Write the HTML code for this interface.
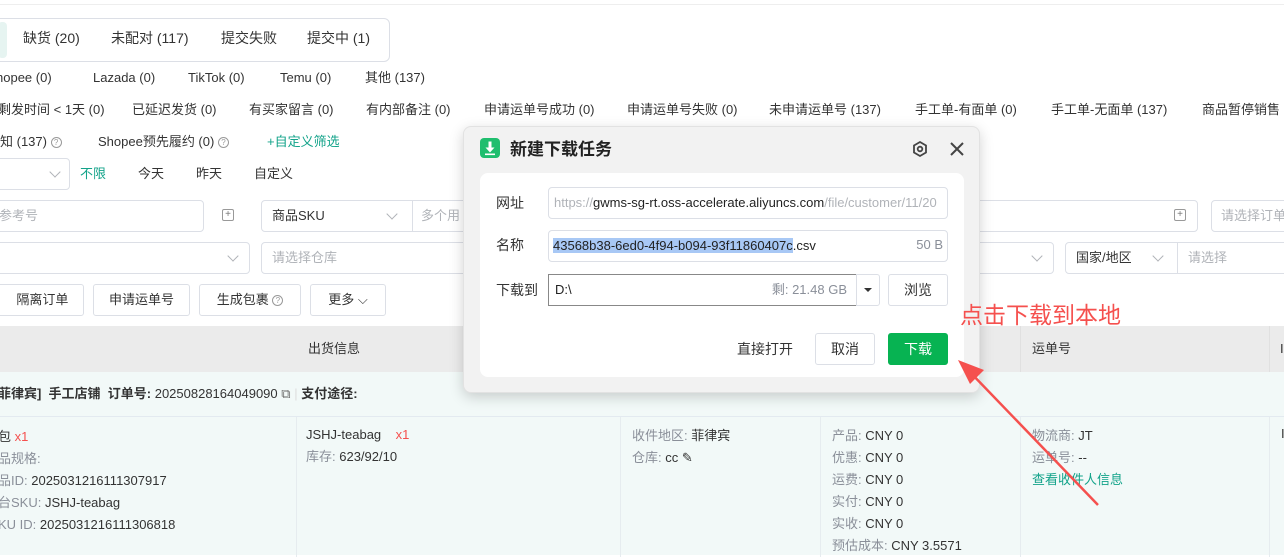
<!DOCTYPE html>
<html><head><meta charset="utf-8"><style>
*{box-sizing:border-box;margin:0;padding:0}
body{width:1284px;height:555px;overflow:hidden;position:relative;background:#fff;font-family:"Liberation Sans","Noto Sans CJK SC",sans-serif;font-size:13px;line-height:17px;color:#333}
.a{position:absolute;white-space:nowrap}
.box{position:absolute;border:1px solid #dcdfe6;border-radius:4px;background:#fff}
.ph{color:#b0b3b8}
.chev{position:absolute;width:8px;height:8px;border-right:1px solid #b0b3b8;border-bottom:1px solid #b0b3b8;transform:rotate(45deg)}
.g{color:#13a38a}
.gray{color:#8a8f99}
.red{color:#f5504e}
.btn{position:absolute;border:1px solid #dcdfe6;border-radius:3px;background:#fff;text-align:center;line-height:29px}
.q{display:inline-block;width:11px;height:11px;border:1px solid #999;border-radius:50%;font-size:8px;line-height:9px;text-align:center;color:#999;vertical-align:1px}
</style></head><body>
<div class="a" style="left:0;top:4px;width:1284px;border-top:1px solid #eee"></div>
<div class="box" style="left:-10px;top:18px;width:400px;height:44px;border-radius:6px"></div>
<div class="a" style="left:-2px;top:22px;width:9px;height:36px;background:#e6f4f1;border-radius:4px"></div>
<div class="a" style="left:23px;top:30px;font-size:14px">缺货 (20)</div>
<div class="a" style="left:111px;top:30px;font-size:14px">未配对 (117)</div>
<div class="a" style="left:221px;top:30px;font-size:14px">提交失败</div>
<div class="a" style="left:307px;top:30px;font-size:14px">提交中 (1)</div>

<div class="a" style="left:-4px;top:69px">hopee (0)</div>
<div class="a" style="left:93px;top:69px">Lazada (0)</div>
<div class="a" style="left:188px;top:69px">TikTok (0)</div>
<div class="a" style="left:280px;top:69px">Temu (0)</div>
<div class="a" style="left:365px;top:69px">其他 (137)</div>

<div class="a" style="left:-2px;top:101px">剩发时间 &lt; 1天 (0)</div>
<div class="a" style="left:132px;top:101px">已延迟发货 (0)</div>
<div class="a" style="left:249px;top:101px">有买家留言 (0)</div>
<div class="a" style="left:366px;top:101px">有内部备注 (0)</div>
<div class="a" style="left:484px;top:101px">申请运单号成功 (0)</div>
<div class="a" style="left:627px;top:101px">申请运单号失败 (0)</div>
<div class="a" style="left:769px;top:101px">未申请运单号 (137)</div>
<div class="a" style="left:915px;top:101px">手工单-有面单 (0)</div>
<div class="a" style="left:1051px;top:101px">手工单-无面单 (137)</div>
<div class="a" style="left:1202px;top:101px">商品暂停销售</div>

<div class="a" style="left:0;top:133px">知 (137) <span class="q">?</span></div>
<div class="a" style="left:98px;top:133px">Shopee预先履约 (0) <span class="q">?</span></div>
<div class="a g" style="left:267px;top:133px">+自定义筛选</div>

<div class="box" style="left:-10px;top:158px;width:80px;height:32px"><div class="chev" style="left:60px;top:9px"></div></div>
<div class="a g" style="left:80px;top:165px">不限</div>
<div class="a" style="left:138px;top:165px">今天</div>
<div class="a" style="left:196px;top:165px">昨天</div>
<div class="a" style="left:254px;top:165px">自定义</div>

<div class="box" style="left:-10px;top:200px;width:214px;height:32px"><span class="a ph" style="left:8px;top:6px">参考号</span><span class="a" style="left:231px;top:8px;width:12px;height:12px;border:1px solid #999;border-radius:2px;font-size:10px;line-height:10px;text-align:center;color:#777">+</span></div>
<div class="box" style="left:261px;top:200px;width:230px;height:32px;border-radius:4px 0 0 4px"><span class="a" style="left:10px;top:6px">商品SKU</span><div class="chev" style="left:126px;top:9px"></div><div class="a" style="left:150px;top:0;height:30px;border-left:1px solid #dcdfe6"></div><span class="a ph" style="left:159px;top:6px">多个用</span></div>
<div class="box" style="left:940px;top:200px;width:258px;height:32px"><span class="a" style="left:233px;top:8px;width:12px;height:12px;border:1px solid #999;border-radius:2px;font-size:10px;line-height:10px;text-align:center;color:#777">+</span></div>
<div class="box" style="left:1211px;top:200px;width:90px;height:32px"><span class="a ph" style="left:9px;top:6px">请选择订单</span></div>

<div class="box" style="left:-10px;top:242px;width:260px;height:32px"><div class="chev" style="left:238px;top:9px"></div></div>
<div class="box" style="left:261px;top:242px;width:230px;height:32px"><span class="a ph" style="left:10px;top:6px">请选择仓库</span></div>
<div class="box" style="left:940px;top:242px;width:114px;height:32px"><div class="chev" style="left:92px;top:9px"></div></div>
<div class="box" style="left:1065px;top:242px;width:240px;height:32px"><span class="a" style="left:10px;top:6px">国家/地区</span><div class="chev" style="left:88px;top:9px"></div><div class="a" style="left:111px;top:0;height:30px;border-left:1px solid #dcdfe6"></div><span class="a ph" style="left:122px;top:6px">请选择</span></div>

<div class="btn" style="left:-10px;top:284px;width:94px;height:32px">&nbsp;&nbsp;&nbsp;隔离订单</div>
<div class="btn" style="left:93px;top:284px;width:97px;height:32px">申请运单号</div>
<div class="btn" style="left:199px;top:284px;width:102px;height:32px">生成包裹 <span class="q">?</span></div>
<div class="btn" style="left:310px;top:284px;width:76px;height:32px">更多 ⌵</div>

<div class="a" style="left:0;top:326px;width:1284px;height:46px;background:#ebebeb"></div>
<div class="a" style="left:1020px;top:326px;height:46px;border-left:1px solid #e0e0e0"></div>
<div class="a" style="left:1269px;top:326px;height:46px;border-left:1px solid #e0e0e0"></div>
<div class="a" style="left:308px;top:340px">出货信息</div>
<div class="a" style="left:1032px;top:340px">运单号</div>
<div class="a" style="left:1280px;top:340px">I</div>

<div class="a" style="left:0;top:372px;width:1284px;height:183px;background:#f2f9f8"></div>
<div class="a" style="left:0;top:416px;width:1284px;border-top:1px solid #e3eaf0"></div>
<div class="a" style="left:-2px;top:385px;font-weight:bold">菲律宾]&nbsp; 手工店铺&nbsp; 订单号: <span style="font-weight:normal">20250828164049090</span> <span style="font-weight:normal;color:#666">⧉</span> <span style="color:#ddd;font-weight:normal">|</span> 支付途径:</div>
<div class="a" style="left:296px;top:417px;height:140px;border-left:1px solid #e6ecef"></div>
<div class="a" style="left:620px;top:417px;height:140px;border-left:1px solid #e6ecef"></div>
<div class="a" style="left:820px;top:417px;height:140px;border-left:1px solid #e6ecef"></div>
<div class="a" style="left:1020px;top:417px;height:140px;border-left:1px solid #e6ecef"></div>
<div class="a" style="left:1269px;top:417px;height:140px;border-left:1px solid #e6ecef"></div>
<div class="a" style="left:-2px;top:426px;line-height:22px">包 <span class="red">x1</span><br><span class="gray">品规格:</span><br><span class="gray">品ID:</span> 2025031216111307917<br><span class="gray">台SKU:</span> JSHJ-teabag<br><span class="gray">KU ID:</span> 2025031216111306818</div>
<div class="a" style="left:306px;top:424px;line-height:22px">JSHJ-teabag&nbsp;&nbsp;&nbsp; <span class="red">x1</span><br><span class="gray">库存:</span> 623/92/10</div>
<div class="a" style="left:632px;top:425px;line-height:22px"><span class="gray">收件地区:</span> 菲律宾<br><span class="gray">仓库:</span> cc ✎</div>
<div class="a" style="left:832px;top:425px;line-height:22px"><span class="gray">产品:</span> CNY 0<br><span class="gray">优惠:</span> CNY 0<br><span class="gray">运费:</span> CNY 0<br><span class="gray">实付:</span> CNY 0<br><span class="gray">实收:</span> CNY 0<br><span class="gray">预估成本:</span> CNY 3.5571</div>
<div class="a" style="left:1032px;top:425px;line-height:22px"><span class="gray">物流商:</span> JT<br><span class="gray">运单号:</span> --<br><span class="g">查看收件人信息</span></div>
<div class="a" style="left:1281px;top:425px">I</div>

<div class="a" style="left:463px;top:126px;width:517px;height:267px;background:#f2f2f2;border:1px solid #e2e2e2;border-radius:8px;box-shadow:0 4px 14px rgba(0,0,0,.18)"></div>
<svg class="a" style="left:480px;top:138px" width="20" height="20" viewBox="0 0 20 20"><rect width="20" height="20" rx="4" fill="#1fbe6e"/><path d="M8.5 3.5h3v6h3l-4.5 5-4.5-5h3z" fill="#fff"/><rect x="5" y="15.5" width="10" height="1.6" fill="#fff"/></svg>
<div class="a" style="left:510px;top:139px;font-size:17px;line-height:22px;font-weight:bold;color:#222">新建下载任务</div>
<svg class="a" style="left:911px;top:140px" width="18" height="18" viewBox="0 0 18 18"><path d="M9 2l6 3.5v7L9 16l-6-3.5v-7z" fill="none" stroke="#444" stroke-width="1.8"/><circle cx="9" cy="9" r="2.3" fill="none" stroke="#444" stroke-width="1.8"/></svg>
<svg class="a" style="left:950px;top:142px" width="14" height="14" viewBox="0 0 14 14"><path d="M1 1l12 12M13 1L1 13" stroke="#444" stroke-width="2"/></svg>
<div class="a" style="left:480px;top:173px;width:484px;height:204px;background:#fff;border-radius:8px"></div>
<div class="a" style="left:496px;top:194px;font-size:14px;line-height:18px">网址</div>
<div class="box" style="left:548px;top:187px;width:400px;height:32px;overflow:hidden"><span class="a" style="left:5px;top:6px;font-size:13px;color:#222"><span class="ph">https://</span>gwms-sg-rt.oss-accelerate.aliyuncs.com<span class="ph">/file/customer/11/20</span></span></div>
<div class="a" style="left:496px;top:236px;font-size:14px;line-height:18px">名称</div>
<div class="box" style="left:548px;top:230px;width:400px;height:32px"><span class="a" style="left:4px;top:6px;color:#222"><span style="background:#a8c8f5">43568b38-6ed0-4f94-b094-93f11860407c</span>.csv</span><span class="a gray" style="right:4px;top:5px">50 B</span></div>
<div class="a" style="left:496px;top:281px;font-size:14px;line-height:18px">下载到</div>
<div class="a" style="left:548px;top:274px;width:309px;height:32px;border:1px solid #888;background:#fff"><span class="a" style="left:6px;top:6px;color:#222">D:\</span><span class="a gray" style="right:9px;top:6px">剩: 21.48 GB</span></div>
<div class="box" style="left:856px;top:274px;width:24px;height:32px;border-radius:0 3px 3px 0"><span class="a" style="left:7px;top:13px;border-left:4px solid transparent;border-right:4px solid transparent;border-top:4px solid #333"></span></div>
<div class="btn" style="left:888px;top:274px;width:60px;height:32px;line-height:30px;font-size:14px">浏览</div>
<div class="a" style="left:737px;top:340px;font-size:14px;line-height:18px">直接打开</div>
<div class="btn" style="left:815px;top:333px;width:60px;height:32px;line-height:30px;font-size:14px">取消</div>
<div class="btn" style="left:888px;top:333px;width:60px;height:32px;line-height:30px;font-size:14px;background:#07b352;border-color:#07b352;color:#fff">下载</div>

<div class="a" style="left:960px;top:300px;font-size:23px;line-height:30px;color:#f5504e">点击下载到本地</div>
<svg class="a" style="left:940px;top:340px" width="180" height="180" viewBox="0 0 180 180"><path d="M28 30L158 165" stroke="#f5504e" stroke-width="2.5"/><path d="M18 20L44 30L30 44z" fill="#f5504e"/></svg>
</body></html>
